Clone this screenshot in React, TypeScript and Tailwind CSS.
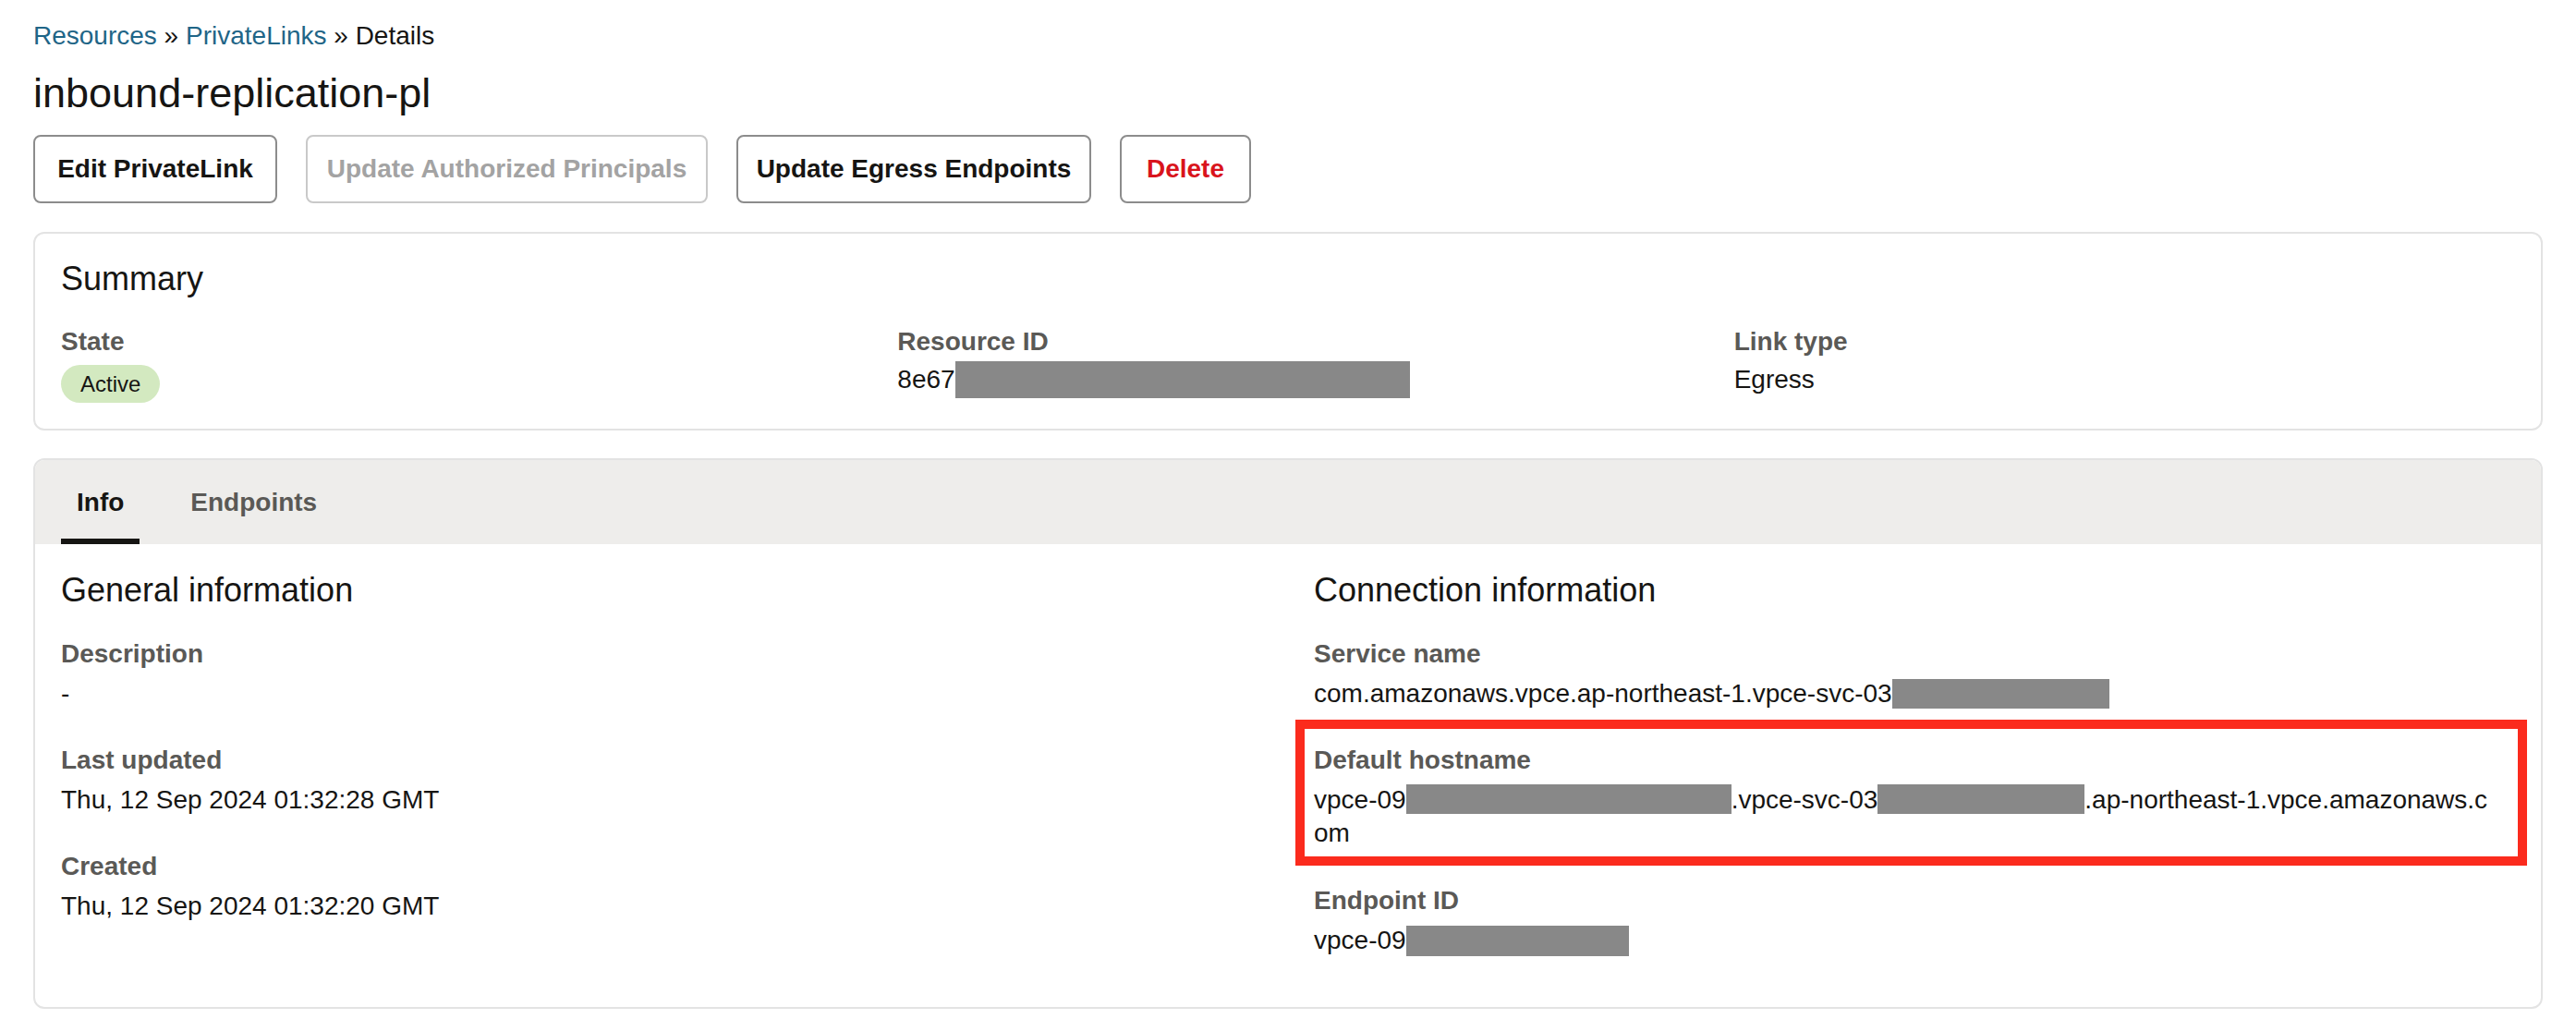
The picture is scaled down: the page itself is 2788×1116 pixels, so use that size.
import React from "react";

function Redacted({ w, h, className = "" }: { w: string; h: string; className?: string }) {
  return <span className={`inline-block bg-[#888888] ${w} ${h} ${className}`} />;
}

function Field({ label, children, className = "" }: { label: string; children: React.ReactNode; className?: string }) {
  return (
    <div className={`relative ${className}`}>
      <div className="text-[28px] leading-[36px] font-bold text-[#5a5956]">{label}</div>
      <div className="mt-[7px] text-[28px] leading-[36px] text-[#161513]">{children}</div>
    </div>
  );
}

export default function App() {
  return (
    <div className="min-h-screen bg-white text-[#161513] font-['Liberation_Sans',Arial,sans-serif] antialiased">
      <div className="flex flex-col px-[36px] pt-[21px] pb-[28px]">
        {/* Breadcrumb */}
        <div className="text-[28px] leading-[36px]">
          <span className="text-[#1f6587]">Resources</span>
          <span> » </span>
          <span className="text-[#1f6587]">PrivateLinks</span>
          <span> » Details</span>
        </div>

        {/* Title */}
        <h1 className="mt-[18px] text-[45px] leading-[52px] font-normal">inbound-replication-pl</h1>

        {/* Actions */}
        <div className="mt-[19px] flex items-center gap-[31px]">
          <button className="flex h-[74px] w-[264px] items-center justify-center rounded-[8px] border-2 border-[#8c8c8c] bg-white text-[28px] font-bold text-[#161513]">
            Edit PrivateLink
          </button>
          <button className="flex h-[74px] w-[435px] items-center justify-center rounded-[8px] border-2 border-[#c9c9c9] bg-white text-[28px] font-bold text-[#a3a3a3]">
            Update Authorized Principals
          </button>
          <button className="flex h-[74px] w-[384px] items-center justify-center rounded-[8px] border-2 border-[#8c8c8c] bg-white text-[28px] font-bold text-[#161513]">
            Update Egress Endpoints
          </button>
          <button className="flex h-[74px] w-[142px] items-center justify-center rounded-[8px] border-2 border-[#8c8c8c] bg-white text-[28px] font-bold text-[#d9141c]">
            Delete
          </button>
        </div>

        {/* Summary */}
        <section className="mt-[31px] rounded-[12px] border-2 border-[#e3e3e3] px-[28px] pt-[27px] pb-[28px]">
          <h2 className="text-[36px] leading-[44px] font-normal">Summary</h2>
          <div className="mt-[28px] grid grid-cols-3 gap-x-[60px]">
            <div>
              <div className="text-[28px] leading-[36px] font-bold text-[#5a5956]">State</div>
              <div className="mt-[7px]">
                <span className="inline-flex h-[41px] items-center rounded-full bg-[#d3e9c0] px-[21px] text-[24px] text-[#161513]">
                  Active
                </span>
              </div>
            </div>
            <div>
              <div className="text-[28px] leading-[36px] font-bold text-[#5a5956]">Resource ID</div>
              <div className="mt-[2px] flex h-[42px] items-center text-[28px]">
                <span>8e67</span>
                <Redacted w="w-[492px]" h="h-[40px]" />
              </div>
            </div>
            <div>
              <div className="text-[28px] leading-[36px] font-bold text-[#5a5956]">Link type</div>
              <div className="mt-[2px] flex h-[42px] items-center text-[28px]">Egress</div>
            </div>
          </div>
        </section>

        {/* Tabs card */}
        <section className="mt-[30px] overflow-hidden rounded-[12px] border-2 border-[#e3e3e3]">
          <div className="flex h-[91px] items-end gap-[38px] bg-[#eeedeb] px-[28px]">
            <div className="flex h-full flex-col justify-center border-b-[6px] border-[#161513] px-[17px] pt-[6px] text-[28px] font-bold text-[#161513]">
              Info
            </div>
            <div className="flex h-full flex-col justify-center border-b-[6px] border-transparent px-[17px] pt-[6px] text-[28px] font-bold text-[#5a5956]">
              Endpoints
            </div>
          </div>

          <div className="grid grid-cols-2 gap-x-[56px] px-[28px] pt-[28px] pb-[54px]">
            {/* General information */}
            <div>
              <h3 className="text-[36px] leading-[44px] font-normal">General information</h3>
              <Field label="Description" className="mt-[29px]">-</Field>
              <Field label="Last updated" className="mt-[36px]">Thu, 12 Sep 2024 01:32:28 GMT</Field>
              <Field label="Created" className="mt-[36px]">Thu, 12 Sep 2024 01:32:20 GMT</Field>
            </div>

            {/* Connection information */}
            <div>
              <h3 className="text-[36px] leading-[44px] font-normal">Connection information</h3>
              <Field label="Service name" className="mt-[29px]">
                <span className="flex items-center">
                  <span>com.amazonaws.vpce.ap-northeast-1.vpce-svc-03</span>
                  <Redacted w="w-[235px]" h="h-[32px]" />
                </span>
              </Field>
              <Field label="Default hostname" className="mt-[36px]">
                <span>vpce-09</span>
                <Redacted w="w-[352px]" h="h-[32px]" className="align-[-6px]" />
                <span>.vpce-svc-03</span>
                <Redacted w="w-[224px]" h="h-[32px]" className="align-[-6px]" />
                <span>.ap-northeast-1.vpce.amazonaws.c</span>
                <br />
                <span>om</span>
                {/* annotation outline */}
                <span className="pointer-events-none absolute -top-[26px] -bottom-[17px] -left-[20px] -right-[13px] border-[10px] border-[#fb2b1d]" />
              </Field>
              <Field label="Endpoint ID" className="mt-[37px]">
                <span className="flex items-center">
                  <span>vpce-09</span>
                  <Redacted w="w-[241px]" h="h-[33px]" />
                </span>
              </Field>
            </div>
          </div>
        </section>
      </div>
    </div>
  );
}
